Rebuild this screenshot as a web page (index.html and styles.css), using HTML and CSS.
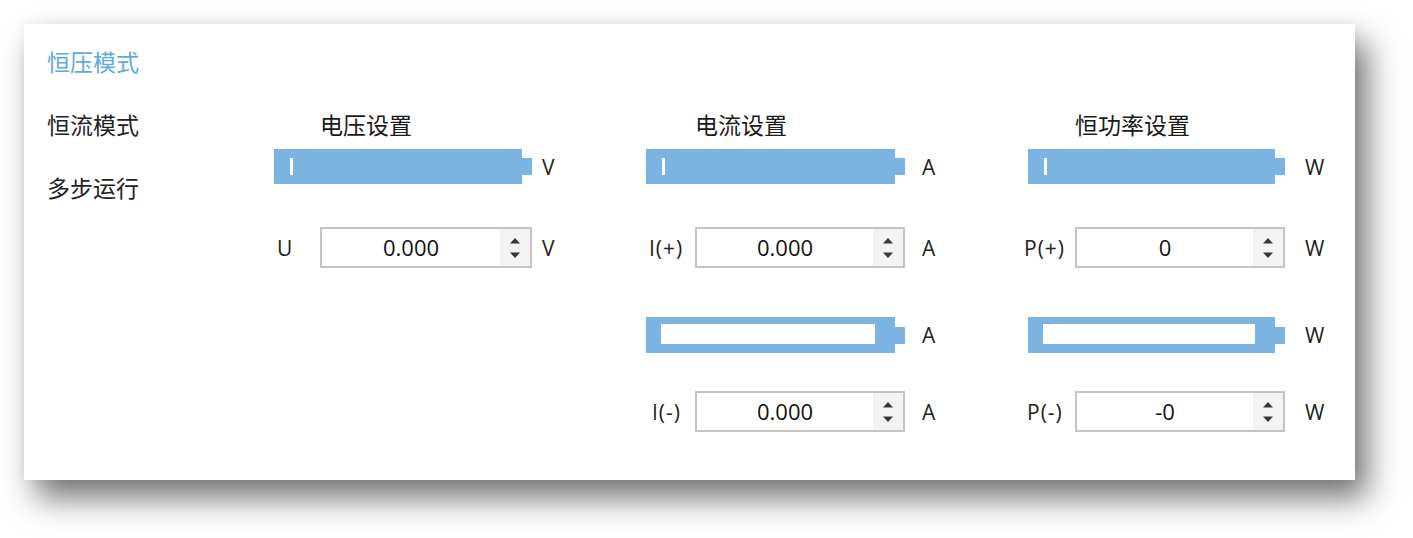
FILE: index.html
```html
<!DOCTYPE html>
<html lang="zh-CN">

<head>
    <meta charset="UTF-8">
    <meta name="viewport" content="width=device-width, initial-scale=1.0">
    <title>电源设置</title>
    <link rel="stylesheet" href="styles.css">
</head>

<body>
    <div class="panel">
        <ul class="menu">
            <li class="menu-item active">恒压模式</li>
            <li class="menu-item">恒流模式</li>
            <li class="menu-item">多步运行</li>
        </ul>

        <!-- voltage -->
        <div class="group group-volt">
            <div class="group-title">电压设置</div>
            <div class="row row-gauge">
                <div class="gauge">
                    <span class="gauge-body"><span class="gauge-cursor"></span></span>
                    <span class="gauge-nib"></span>
                </div>
                <span class="unit">V</span>
            </div>
            <div class="row row-spin">
                <span class="field-label">U</span>
                <div class="spin">
                    <span class="spin-value">0.000</span>
                    <span class="spin-buttons">
                        <svg width="12" height="8" viewBox="0 0 12 8"><path d="M6 1 L11 6.5 H1 Z" fill="#3a3636"/></svg>
                        <svg width="12" height="8" viewBox="0 0 12 8"><path d="M6 7 L11 1.5 H1 Z" fill="#3a3636"/></svg>
                    </span>
                </div>
                <span class="unit">V</span>
            </div>
        </div>

        <!-- current -->
        <div class="group group-curr">
            <div class="group-title">电流设置</div>
            <div class="row row-gauge">
                <div class="gauge">
                    <span class="gauge-body"><span class="gauge-cursor"></span></span>
                    <span class="gauge-nib"></span>
                </div>
                <span class="unit">A</span>
            </div>
            <div class="row row-spin">
                <span class="field-label">I(+)</span>
                <div class="spin">
                    <span class="spin-value">0.000</span>
                    <span class="spin-buttons">
                        <svg width="12" height="8" viewBox="0 0 12 8"><path d="M6 1 L11 6.5 H1 Z" fill="#3a3636"/></svg>
                        <svg width="12" height="8" viewBox="0 0 12 8"><path d="M6 7 L11 1.5 H1 Z" fill="#3a3636"/></svg>
                    </span>
                </div>
                <span class="unit">A</span>
            </div>
            <div class="row row-gauge2">
                <div class="gauge">
                    <span class="gauge-body empty"><span class="gauge-hole"></span></span>
                    <span class="gauge-nib"></span>
                </div>
                <span class="unit">A</span>
            </div>
            <div class="row row-spin2">
                <span class="field-label minus">I(-)</span>
                <div class="spin">
                    <span class="spin-value">0.000</span>
                    <span class="spin-buttons">
                        <svg width="12" height="8" viewBox="0 0 12 8"><path d="M6 1 L11 6.5 H1 Z" fill="#3a3636"/></svg>
                        <svg width="12" height="8" viewBox="0 0 12 8"><path d="M6 7 L11 1.5 H1 Z" fill="#3a3636"/></svg>
                    </span>
                </div>
                <span class="unit">A</span>
            </div>
        </div>

        <!-- power -->
        <div class="group group-power">
            <div class="group-title">恒功率设置</div>
            <div class="row row-gauge">
                <div class="gauge">
                    <span class="gauge-body"><span class="gauge-cursor"></span></span>
                    <span class="gauge-nib"></span>
                </div>
                <span class="unit">W</span>
            </div>
            <div class="row row-spin">
                <span class="field-label">P(+)</span>
                <div class="spin">
                    <span class="spin-value">0</span>
                    <span class="spin-buttons">
                        <svg width="12" height="8" viewBox="0 0 12 8"><path d="M6 1 L11 6.5 H1 Z" fill="#3a3636"/></svg>
                        <svg width="12" height="8" viewBox="0 0 12 8"><path d="M6 7 L11 1.5 H1 Z" fill="#3a3636"/></svg>
                    </span>
                </div>
                <span class="unit">W</span>
            </div>
            <div class="row row-gauge2">
                <div class="gauge">
                    <span class="gauge-body empty"><span class="gauge-hole"></span></span>
                    <span class="gauge-nib"></span>
                </div>
                <span class="unit">W</span>
            </div>
            <div class="row row-spin2">
                <span class="field-label minus">P(-)</span>
                <div class="spin">
                    <span class="spin-value">-0</span>
                    <span class="spin-buttons">
                        <svg width="12" height="8" viewBox="0 0 12 8"><path d="M6 1 L11 6.5 H1 Z" fill="#3a3636"/></svg>
                        <svg width="12" height="8" viewBox="0 0 12 8"><path d="M6 7 L11 1.5 H1 Z" fill="#3a3636"/></svg>
                    </span>
                </div>
                <span class="unit">W</span>
            </div>
        </div>
    </div>
</body>

</html>
```

FILE: styles.css
```css
body {
    font-family: "Open Sans", "Noto Sans CJK SC", sans-serif;
    background-color: #fff;
    color: #1e1e1e;
    margin: 0;
    padding: 24px 24px 58px;
}

.panel {
    display: flex;
    width: 1331px;
    height: 456px;
    box-sizing: border-box;
    padding: 22px 0 0 23px;
    background-color: #fff;
    box-shadow: 12px 18px 30px rgba(0, 0, 0, 0.55), 0 -2px 10px rgba(0, 0, 0, 0.05);
}

.menu {
    list-style: none;
    margin: 0;
    padding: 0;
    width: 227px;
    flex-shrink: 0;
}

.menu-item {
    font-size: 23px;
    line-height: 32px;
    height: 63px;
    color: #222;
}

.menu-item.active {
    color: #5eaae4;
}

.group {
    --label-w: 46px;
    --ctrl-w: 212px;
    --unit-gap: 10px;
    --gauge-left: 0px;
    flex-shrink: 0;
    margin-top: 66px;
}

.group-volt {
    width: 372px;
}

.group-curr {
    width: 375px;
    --label-w: 49px;
    --ctrl-w: 210px;
    --unit-gap: 17px;
}

.group-power {
    --label-w: 54px;
    --ctrl-w: 210px;
    --unit-gap: 20px;
    --gauge-left: 7px;
}

.group-title {
    padding-left: var(--label-w);
    font-size: 23px;
    line-height: 26px;
    height: 26px;
    color: #1a1a1a;
}

.row {
    display: flex;
    align-items: center;
}

.row-gauge {
    margin-top: 11px;
    height: 35px;
}

.row-spin {
    margin-top: 43px;
    height: 41px;
}

.row-gauge2 {
    margin-top: 49px;
    height: 36px;
}

.row-spin2 {
    margin-top: 38px;
    height: 41px;
}

.gauge {
    display: flex;
    align-items: center;
    height: 100%;
    margin-left: var(--gauge-left);
    width: calc(var(--label-w) + var(--ctrl-w) - var(--gauge-left));
}

.gauge-body {
    flex: 1;
    height: 100%;
    background-color: #7bb4e1;
    display: flex;
    align-items: center;
}

.gauge-cursor {
    width: 3px;
    height: 17px;
    margin-left: 16px;
    background-color: #fff;
}

.gauge-body.empty {
    align-items: stretch;
    padding: 7px 20px 9px 15px;
    box-sizing: border-box;
}

.gauge-hole {
    flex: 1;
    background-color: #fff;
}

.gauge-nib {
    width: 10px;
    height: 17px;
    background-color: #7bb4e1;
}

.unit {
    margin-left: var(--unit-gap);
    font-size: 21px;
    color: #222;
}

.field-label {
    width: var(--label-w);
    box-sizing: border-box;
    padding-left: 3px;
    font-size: 21px;
    letter-spacing: 1px;
    color: #222;
}

.field-label.minus {
    padding-left: 6px;
}

.spin {
    display: flex;
    width: var(--ctrl-w);
    height: 41px;
    box-sizing: border-box;
    border: 2px solid #c8c3bf;
    background-color: #fff;
}

.spin-value {
    flex: 1;
    text-align: center;
    font-size: 22px;
    line-height: 37px;
    color: #111;
}

.spin-buttons {
    width: 30px;
    display: flex;
    flex-direction: column;
    justify-content: center;
    align-items: center;
    gap: 6px;
    background-color: #f3f3f3;
}

.spin-buttons svg {
    display: block;
}
```
